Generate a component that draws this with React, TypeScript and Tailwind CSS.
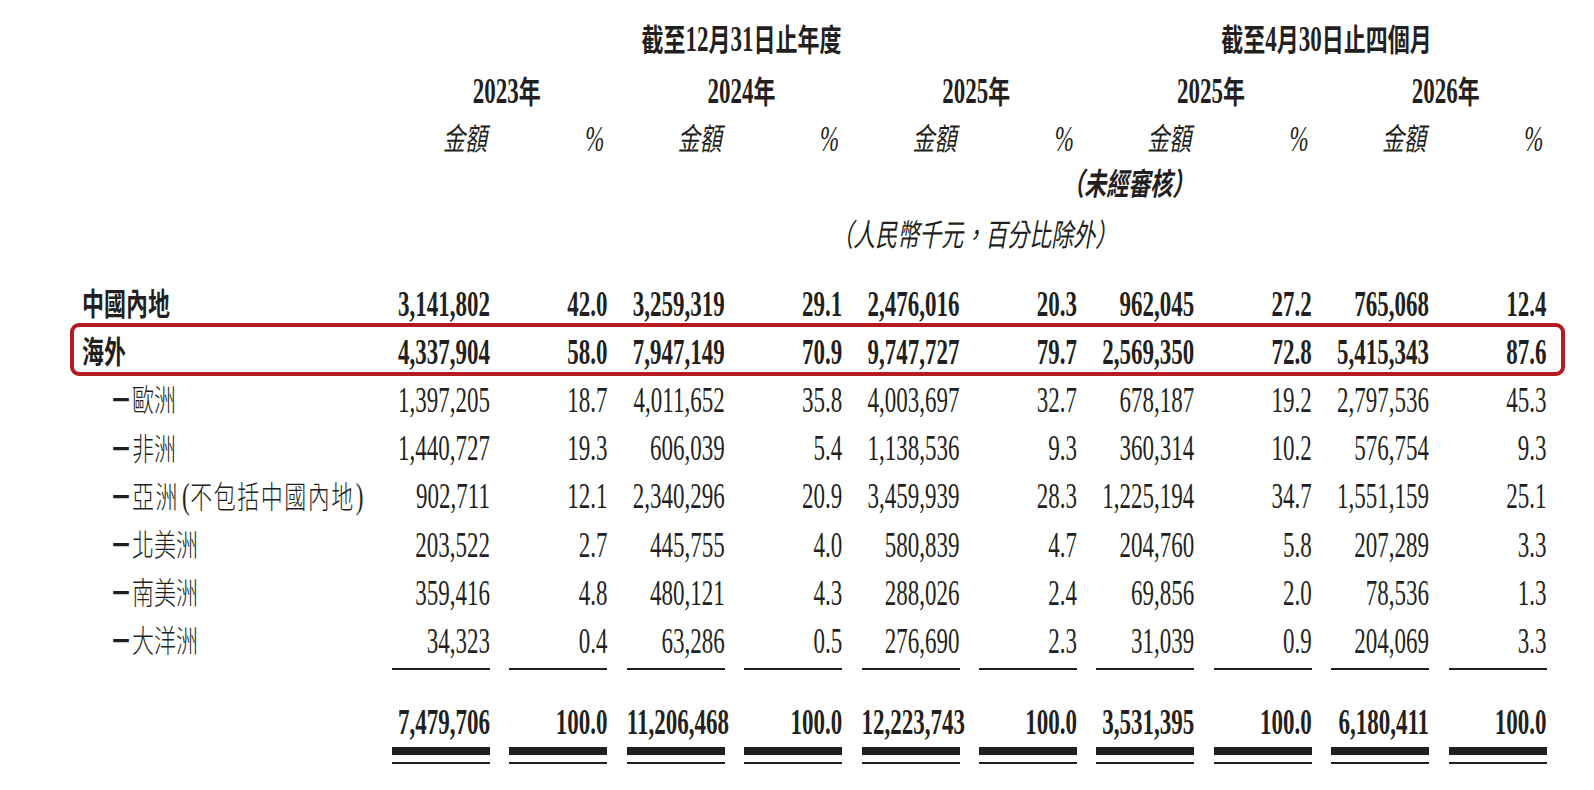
import React from 'react'

// CJK runs and Latin runs need different proportions (the source uses a tall condensed face)
const CJK_RE = /([\u3000-\u303f\u3400-\u9fff\uff00-\uffef]+)/

function Txt({ text, className = '' }: { text: string; className?: string }) {
  const parts = text.split(CJK_RE).filter(Boolean)
  return (
    <span className={className}>
      {parts.map((p, i) =>
        CJK_RE.test(p) ? (
          <span
            key={i}
            className="inline-block font-['Liberation_Serif','Noto_Sans_CJK_TC',sans-serif] text-[22px] leading-none scale-y-[1.4] origin-[50%_19px]"
          >
            {p}
          </span>
        ) : (
          <span
            key={i}
            className={`inline-block font-['Liberation_Serif',serif] text-[23px] leading-none scale-y-[1.6] origin-[50%_19px] ${
              p === '(' ? 'ml-[3px] -mr-[1px]' : p === ')' ? 'ml-[1px]' : ''
            }`}
          >
            {p}
          </span>
        )
      )}
    </span>
  )
}

const GRID = 'grid grid-cols-[372.6px_repeat(10,98px)] gap-x-[19.4px]'

interface RowData {
  label: string
  sub?: boolean
  bold?: boolean
  values: string[]
  highlight?: boolean
  wide?: boolean
}

const rows: RowData[] = [
  { label: '中國內地', bold: true, values: ['3,141,802', '42.0', '3,259,319', '29.1', '2,476,016', '20.3', '962,045', '27.2', '765,068', '12.4'] },
  { label: '海外', bold: true, highlight: true, values: ['4,337,904', '58.0', '7,947,149', '70.9', '9,747,727', '79.7', '2,569,350', '72.8', '5,415,343', '87.6'] },
  { label: '歐洲', sub: true, values: ['1,397,205', '18.7', '4,011,652', '35.8', '4,003,697', '32.7', '678,187', '19.2', '2,797,536', '45.3'] },
  { label: '非洲', sub: true, values: ['1,440,727', '19.3', '606,039', '5.4', '1,138,536', '9.3', '360,314', '10.2', '576,754', '9.3'] },
  { label: '亞洲(不包括中國內地)', sub: true, wide: true, values: ['902,711', '12.1', '2,340,296', '20.9', '3,459,939', '28.3', '1,225,194', '34.7', '1,551,159', '25.1'] },
  { label: '北美洲', sub: true, values: ['203,522', '2.7', '445,755', '4.0', '580,839', '4.7', '204,760', '5.8', '207,289', '3.3'] },
  { label: '南美洲', sub: true, values: ['359,416', '4.8', '480,121', '4.3', '288,026', '2.4', '69,856', '2.0', '78,536', '1.3'] },
  { label: '大洋洲', sub: true, values: ['34,323', '0.4', '63,286', '0.5', '276,690', '2.3', '31,039', '0.9', '204,069', '3.3'] },
]

const totals = ['7,479,706', '100.0', '11,206,468', '100.0', '12,223,743', '100.0', '3,531,395', '100.0', '6,180,411', '100.0']

const cols = [0, 1, 2, 3, 4, 5, 6, 7, 8, 9]

function DataRow({ row }: { row: RowData }) {
  const weight = row.bold ? 'font-bold' : 'font-light'
  return (
    <div className={`${GRID} relative h-[48.2px] items-center leading-none`}>
      <div className={`${row.sub ? 'pl-[110px]' : 'pl-[82px]'} whitespace-nowrap ${weight}`}>
        {row.sub && <Txt text="－" className="font-bold" />}
        <Txt text={row.label} className={row.wide ? 'tracking-[1.5px]' : ''} />
      </div>
      {row.values.map((v, i) => (
        <div key={i} className={`text-right whitespace-nowrap ${weight}`}>
          <Txt text={v} />
        </div>
      ))}
      {row.highlight && (
        <div className="pointer-events-none absolute left-[70px] top-[-9px] h-[53px] w-[1495px] rounded-[9px] border-[4.5px] border-[#b51c21]" />
      )}
    </div>
  )
}

export default function App() {
  return (
    <div className="min-h-screen w-full bg-white text-[#231f20]">
      <div className="pt-[18px]">
        {/* period headings */}
        <div className={`${GRID} h-[50px] items-center leading-none font-bold`}>
          <div className="col-start-4 col-span-2 flex justify-center pl-[14px] whitespace-nowrap">
            <Txt text="截至12月31日止年度" />
          </div>
          <div className="col-start-8 col-span-4 flex justify-center pl-[10px] whitespace-nowrap">
            <Txt text="截至4月30日止四個月" />
          </div>
        </div>

        {/* years */}
        <div className={`${GRID} h-[54px] items-center leading-none font-bold`}>
          {['2023年', '2024年', '2025年', '2025年', '2026年'].map((y, i) => (
            <div
              key={i}
              className={`${['col-start-2', 'col-start-4', 'col-start-6', 'col-start-8', 'col-start-10'][i]} col-span-2 flex justify-center pl-[14px] whitespace-nowrap`}
            >
              <Txt text={y} />
            </div>
          ))}
        </div>

        {/* amount / percent */}
        <div className={`${GRID} h-[42px] items-center leading-none italic`}>
          <div />
          {cols.map((i) => (
            <div key={i} className="flex justify-end pr-[3px] whitespace-nowrap">
              <Txt text={i % 2 === 0 ? '金額' : '%'} />
            </div>
          ))}
        </div>

        {/* unaudited */}
        <div className={`${GRID} h-[47px] items-center leading-none italic font-bold`}>
          <div className="col-start-8 flex justify-end whitespace-nowrap">
            <Txt text="（未經審核）" />
          </div>
        </div>

        {/* unit note */}
        <div className={`${GRID} h-[56px] items-center leading-none italic`}>
          <div className="col-start-2 col-span-10 flex justify-center pl-[10px] whitespace-nowrap">
            <Txt text="（人民幣千元，百分比除外）" />
          </div>
        </div>

        <div className="mt-[17px]">
          {rows.map((r) => (
            <DataRow key={r.label} row={r} />
          ))}
        </div>

        {/* single rule */}
        <div className={`${GRID} -mt-[2px]`}>
          <div />
          {cols.map((i) => (
            <div key={i} className="h-[2px] bg-[#231f20]" />
          ))}
        </div>

        {/* totals */}
        <div className={`${GRID} mt-[36px] h-[41px] items-center leading-none font-bold`}>
          <div />
          {totals.map((v, i) => (
            <div key={i} className="text-right whitespace-nowrap">
              <Txt text={v} />
            </div>
          ))}
        </div>

        {/* double rule */}
        <div className={GRID}>
          <div />
          {cols.map((i) => (
            <div key={i} className="flex flex-col gap-[7px]">
              <div className="h-[8px] bg-[#231f20]" />
              <div className="h-[2px] bg-[#231f20]" />
            </div>
          ))}
        </div>
      </div>
    </div>
  )
}
